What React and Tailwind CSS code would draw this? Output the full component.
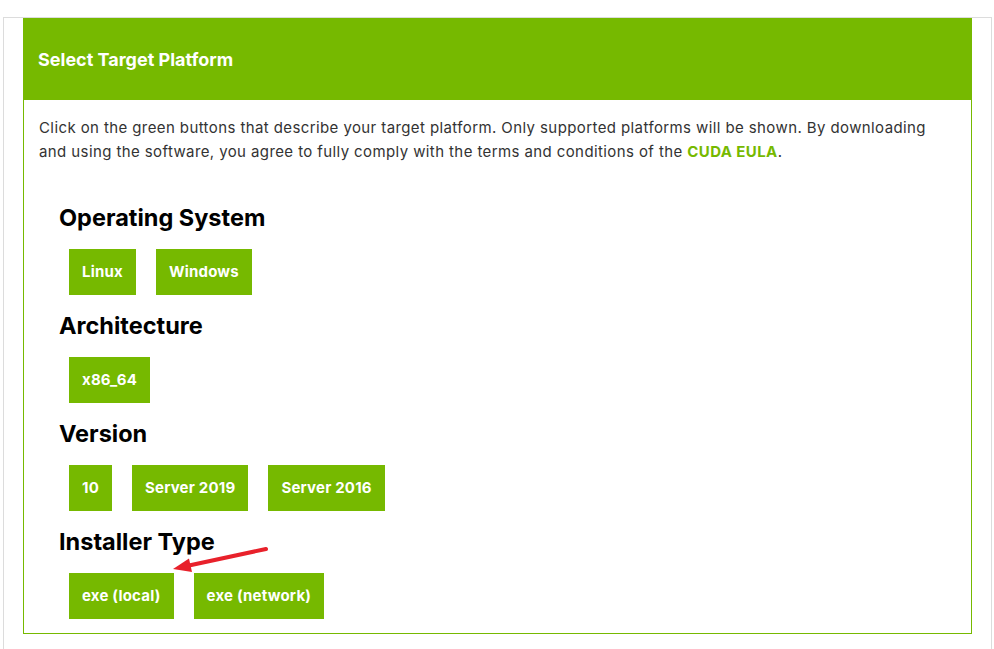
export default function App() {
  const sections = [
    { title: "Operating System", options: ["Linux", "Windows"] },
    { title: "Architecture", options: ["x86_64"] },
    { title: "Version", options: ["10", "Server 2019", "Server 2016"] },
    { title: "Installer Type", options: ["exe (local)", "exe (network)"] },
  ];

  return (
    <div
      className="min-h-screen bg-white pt-[17px] pl-[3px] pr-[2px]"
      style={{ fontFamily: "Inter, 'DejaVu Sans', sans-serif" }}
    >
      <div className="border border-[#dcdcdc] border-b-0 pl-[19px] pr-[19px] pb-[40px]">
        <div className="relative border border-[#76b900]">
          {/* Header */}
          <div className="bg-[#76b900] h-[81px] flex items-center px-[14px]">
            <h2 className="text-white font-bold text-[18px]">Select Target Platform</h2>
          </div>

          <div className="px-[15px] pt-[16px] pb-[14px]">
            <p className="text-[#333] text-[15px] leading-[24px] tracking-[0.4px] whitespace-nowrap">
              Click on the green buttons that describe your target platform. Only supported platforms will be shown. By downloading
              <br />
              and using the software, you agree to fully comply with the terms and conditions of the{" "}
              <span className="text-[#76b900] font-bold">CUDA EULA</span>.
            </p>

            <div className="pl-[20px] pt-[39px]">
              {sections.map((s, i) => (
                <div key={s.title} className={i > 0 ? "mt-4" : ""}>
                  <h3 className="text-black font-bold text-[23.5px] leading-[30px] mb-4">{s.title}</h3>
                  <div className="flex gap-5 pl-[10px]">
                    {s.options.map((o) => (
                      <button
                        key={o}
                        className="bg-[#76b900] text-white font-bold text-[15px] tracking-[0.2px] h-[46px] px-[13px]"
                      >
                        {o}
                      </button>
                    ))}
                  </div>
                </div>
              ))}
            </div>
          </div>

          {/* annotation arrow */}
          <svg
            className="absolute left-[123px] top-[520px] pointer-events-none"
            width="140"
            height="60"
            viewBox="0 0 140 60"
          >
            <line x1="119" y1="10" x2="42" y2="26.5" stroke="#e8212b" strokeWidth="4" strokeLinecap="round" />
            <polygon points="26,30 42,19.4 45,33" fill="#e8212b" />
          </svg>
        </div>
      </div>
    </div>
  );
}
